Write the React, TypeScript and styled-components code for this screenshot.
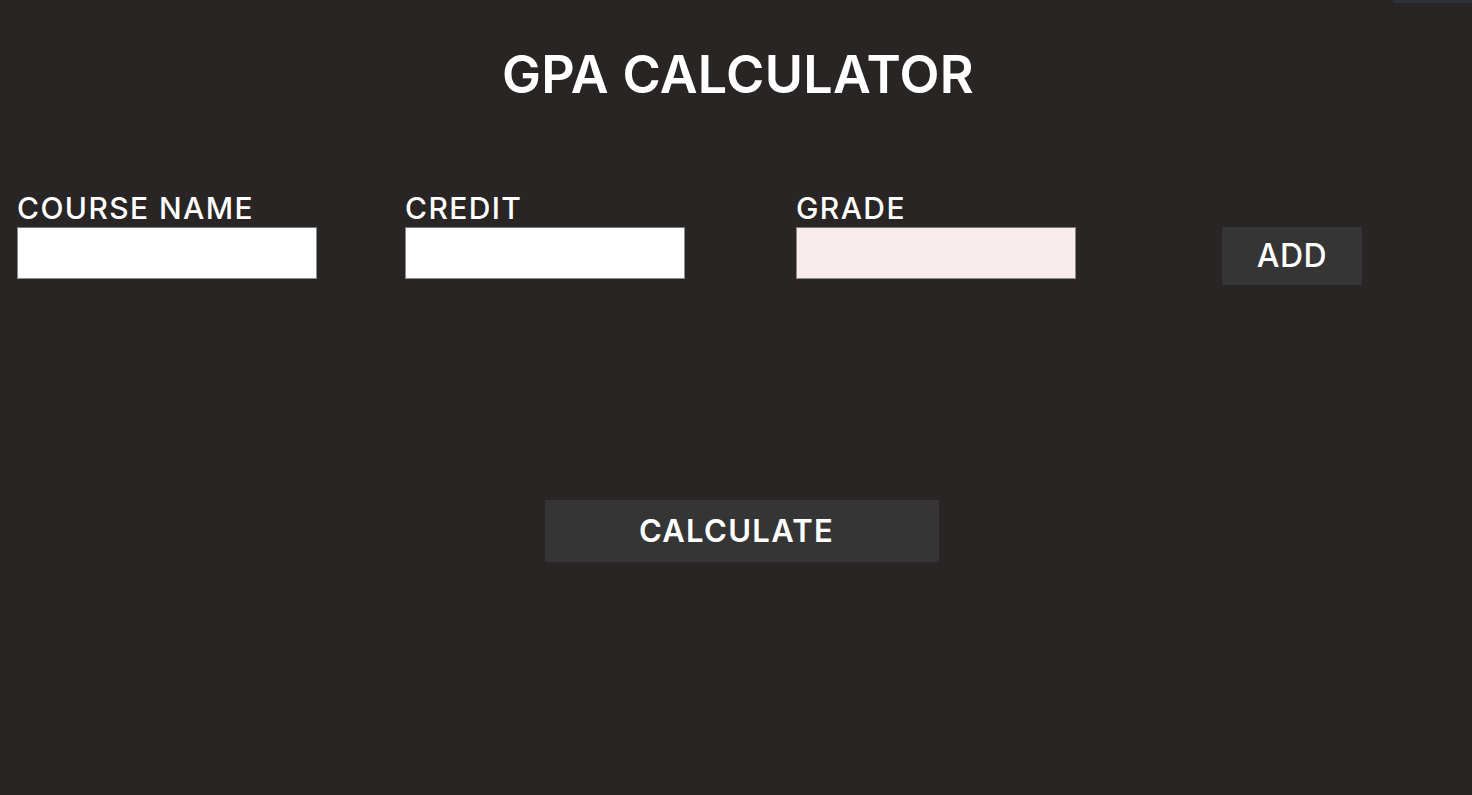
import styled, { createGlobalStyle } from "styled-components";

const GlobalStyle = createGlobalStyle`
  html, body {
    margin: 0;
    padding: 0;
    background: #292524;
    font-family: Inter, "Noto Sans", sans-serif;
  }
`;

const fields = [
  { label: "COURSE NAME", width: 300, bg: "#ffffff" },
  { label: "CREDIT", width: 280, bg: "#ffffff" },
  { label: "GRADE", width: 280, bg: "#f7eceb" },
];

const App = () => {
  return (
    <Page>
      <GlobalStyle />
      <CornerStrip />
      <Title>GPA CALCULATOR</Title>
      <Form>
        {fields.map((f) => (
          <Field key={f.label}>
            <Label>{f.label}</Label>
            <Input $width={f.width} $bg={f.bg} />
          </Field>
        ))}
        <AddButton>ADD</AddButton>
      </Form>
      <Footer>
        <CalcButton>CALCULATE</CalcButton>
      </Footer>
    </Page>
  );
};

const Page = styled.div`
  position: relative;
  width: 100%;
  height: 795px;
  background: #292524;
  color: #ffffff;
  overflow: hidden;
`;

const CornerStrip = styled.div`
  position: absolute;
  top: 0;
  right: 0;
  width: 79px;
  height: 3px;
  background: #2b3039;
`;

const Title = styled.h1`
  margin: 0;
  padding-top: 44px;
  text-align: center;
  font-size: 52px;
  font-weight: 600;
  line-height: 62px;
  letter-spacing: 0.3px;
  padding-left: 4px;
`;

const Form = styled.div`
  display: grid;
  grid-template-columns: 388px 391px 426px auto;
  align-items: start;
  padding-left: 17px;
  margin-top: 86px;
`;

const Field = styled.div`
  display: flex;
  flex-direction: column;
`;

const Label = styled.label`
  font-size: 30px;
  font-weight: 500;
  line-height: 32px;
  letter-spacing: 1.4px;
  margin-bottom: 3px;
`;

const Input = styled.input<{ $width: number; $bg: string }>`
  box-sizing: border-box;
  width: ${(p) => p.$width}px;
  height: 52px;
  margin: 0;
  border: 1px solid #8a8a8a;
  border-top-color: #767676;
  background: ${(p) => p.$bg};
  outline: none;
`;

const AddButton = styled.button`
  justify-self: start;
  margin-top: 35px;
  width: 140px;
  height: 58px;
  border: none;
  background: #363535;
  color: #ffffff;
  font-family: Inter, "Noto Sans", sans-serif;
  font-size: 32px;
  font-weight: 500;
  letter-spacing: 0.5px;
  padding: 0 0 2px;
`;

const Footer = styled.div`
  display: flex;
  justify-content: center;
  margin-top: 215px;
  padding-left: 11px;
`;

const CalcButton = styled.button`
  width: 394px;
  height: 62px;
  border: none;
  background: #363535;
  color: #ffffff;
  font-family: Inter, "Noto Sans", sans-serif;
  font-size: 31px;
  font-weight: 600;
  letter-spacing: 1.3px;
  padding: 0 10px 2px 0;
`;

export default App;
